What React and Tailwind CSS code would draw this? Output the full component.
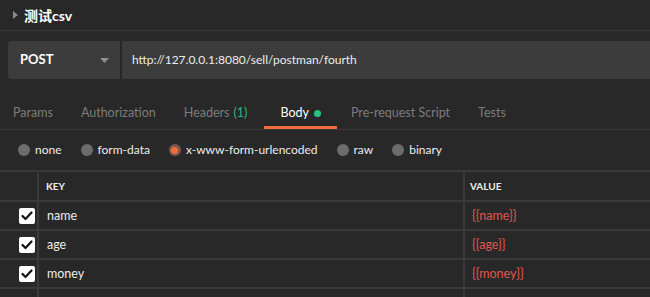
import React from "react";

const tabs = [
  { label: "Params" },
  { label: "Authorization" },
  { label: "Headers", count: "(1)" },
  { label: "Body", active: true },
  { label: "Pre-request Script" },
  { label: "Tests" },
];

const bodyTypes = [
  { label: "none" },
  { label: "form-data" },
  { label: "x-www-form-urlencoded", checked: true },
  { label: "raw" },
  { label: "binary" },
];

const rows = [
  { key: "name", value: "{{name}}" },
  { key: "age", value: "{{age}}" },
  { key: "money", value: "{{money}}" },
];

function Check() {
  return (
    <div className="w-[16px] h-[16px] bg-white rounded-[2px] flex items-center justify-center">
      <svg width="12" height="10" viewBox="0 0 12 10">
        <polyline points="1.5,5 4.5,8 10.5,1.5" fill="none" stroke="#111" strokeWidth="2.2" strokeLinecap="round" strokeLinejoin="round" />
      </svg>
    </div>
  );
}

export default function App() {
  return (
    <div className="w-[650px] h-[297px] overflow-hidden bg-[#282828] text-[#e8e8e8] font-['Lato',sans-serif]">
      {/* title */}
      <div className="h-[31px] flex items-center pl-[13px] border-b border-[#3a3a3a]">
        <svg width="5" height="8" viewBox="0 0 5 8">
          <polygon points="0,0 5,4 0,8" fill="#8a8a8a" />
        </svg>
        <span className="ml-[6px] text-[14px] font-bold text-white font-['Lato','Noto_Sans_CJK_SC',sans-serif]">测试csv</span>
      </div>

      {/* request bar */}
      <div className="mt-[10px] ml-[8px] h-[38px] flex">
        <div className="w-[112px] bg-[#3c3c3c] rounded-l-[3px] flex items-center justify-between pl-[12px] pr-[11px]">
          <span className="text-[13px] font-bold text-white">POST</span>
          <svg width="9" height="5" viewBox="0 0 9 5">
            <polygon points="0,0 9,0 4.5,5" fill="#8e8e8e" />
          </svg>
        </div>
        <div className="flex-1 ml-[2px] bg-[#3c3c3c] flex items-center pl-[10px] text-[12px] text-[#ececec]">
          http://127.0.0.1:8080/sell/postman/fourth
        </div>
      </div>

      {/* tabs */}
      <div className="mt-[18px] h-[33px] flex border-b border-[#3a3a3a] ml-[-1px]">
        {tabs.map((t) => (
          <div
            key={t.label}
            className={`relative h-[32px] flex items-center text-[12.5px] ${t.active ? "ml-[3px] px-[16px] text-white" : "px-[14px] text-[#7c7c7c]"}`}
          >
            <span>{t.label}</span>
            {t.count && <span className="ml-[4px] text-[#2fb47f]">{t.count}</span>}
            {t.active && <span className="ml-[5px] w-[7px] h-[7px] rounded-full bg-[#26c281]" />}
            {t.active && <div className="absolute left-0 right-0 bottom-0 h-[3px] bg-[#f26b3a]" />}
          </div>
        ))}
      </div>

      {/* body type radios */}
      <div className="h-[40px] flex items-center pl-[18px] gap-[19px]">
        {bodyTypes.map((b) => (
          <div key={b.label} className="flex items-center">
            {b.checked ? (
              <span className="w-[12px] h-[12px] rounded-full bg-[#7a5a4e] flex items-center justify-center">
                <span className="w-[7px] h-[7px] rounded-full bg-[#f26b3a]" />
              </span>
            ) : (
              <span className="w-[12px] h-[12px] rounded-full bg-[#6c6c6c]" />
            )}
            <span className="ml-[5px] text-[12px] text-[#ececec]">{b.label}</span>
          </div>
        ))}
      </div>

      {/* table */}
      <div className="border-t-2 border-[#3a3a3a] pt-[1px]">
        <div className="h-[29px] flex border-b-2 border-[#3a3a3a]">
          <div className="w-[39px] shrink-0 border-r-2 border-[#3a3a3a]" />
          <div className="w-[426px] shrink-0 border-r-2 border-[#3a3a3a] flex items-center pl-[7px] text-[10px] font-bold text-[#eeeeee]">KEY</div>
          <div className="flex-1 flex items-center pl-[5px] text-[10px] font-bold text-[#eeeeee]">VALUE</div>
        </div>
        {rows.map((r) => (
          <div key={r.key} className="h-[29px] flex border-b-2 border-[#3a3a3a]">
            <div className="w-[39px] shrink-0 border-r-2 border-[#3a3a3a] flex items-center justify-end pr-[2px]">
              <Check />
            </div>
            <div className="w-[426px] shrink-0 border-r-2 border-[#3a3a3a] flex items-center pl-[8px] pt-[2px] text-[12.5px] text-[#ececec]">{r.key}</div>
            <div className="flex-1 flex items-center pl-[7px] pt-[2px] text-[12.5px] text-[#e25650]">{r.value}</div>
          </div>
        ))}
        <div className="h-[29px] flex">
          <div className="w-[39px] shrink-0 border-r-2 border-[#3a3a3a]" />
          <div className="w-[426px] shrink-0 border-r-2 border-[#3a3a3a]" />
          <div className="flex-1" />
        </div>
      </div>
    </div>
  );
}
